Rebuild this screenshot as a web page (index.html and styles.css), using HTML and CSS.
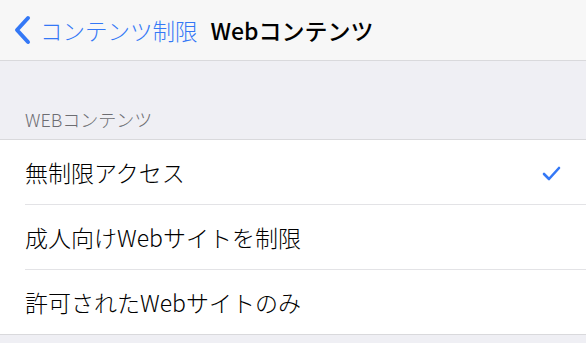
FILE: index.html
```html
<!DOCTYPE html>
<html lang="ja">
<head>
    <meta charset="UTF-8">
    <meta name="viewport" content="width=device-width, initial-scale=1.0">
    <title>Webコンテンツ</title>
    <link rel="stylesheet" href="styles.css">
</head>
<body>
    <div class="navbar">
        <a class="back" href="#">
            <svg class="chevron" width="20" height="30" viewBox="0 0 20 30">
                <path d="M16 3 L5 15 L16 27" fill="none" stroke="#3478f6" stroke-width="4" stroke-linecap="round" stroke-linejoin="round"/>
            </svg>
            <span>コンテンツ制限</span>
        </a>
        <div class="title">Webコンテンツ</div>
    </div>

    <div class="section-header">WEBコンテンツ</div>
    <ul class="list">
        <li class="row">
            <span>無制限アクセス</span>
            <svg class="check" width="20" height="16" viewBox="0 0 20 16">
                <path d="M2 9 L7 14 L17 3" fill="none" stroke="#3478f6" stroke-width="2.6" stroke-linecap="round" stroke-linejoin="round"/>
            </svg>
        </li>
        <li class="row"><span>成人向けWebサイトを制限</span></li>
        <li class="row"><span>許可されたWebサイトのみ</span></li>
    </ul>
</body>
</html>
```

FILE: styles.css
```css
body {
    font-family: "Noto Sans CJK JP", "Noto Sans", sans-serif;
    background-color: #efeff4;
    color: #000;
    margin: 0;
    padding: 0;
}
.navbar {
    height: 60px;
    background: #f7f7f7;
    border-bottom: 1px solid #d9d9dc;
    display: flex;
    align-items: center;
}
.back {
    display: flex;
    align-items: center;
    color: #3478f6;
    text-decoration: none;
    font-size: 22.5px;
    font-weight: 300;
    padding-left: 12px;
}
.chevron {
    margin-right: 8px;
}
.title {
    font-size: 23px;
    font-weight: 500;
    margin-left: 13px;
}
.section-header {
    color: #6d6d72;
    font-size: 18px;
    font-weight: 300;
    padding: 46px 25px 8px;
    line-height: 24px;
}
.list {
    list-style: none;
    margin: 0;
    padding: 0 0 0 25px;
    background: #fff;
    border-top: 1px solid #d9d9dc;
    border-bottom: 1px solid #d9d9dc;
}
.row {
    height: 64px;
    display: flex;
    align-items: center;
    justify-content: space-between;
    padding-right: 24px;
    font-size: 23px;
    font-weight: 300;
    border-bottom: 1px solid #e3e3e6;
}
.row:last-child {
    border-bottom: none;
}
.check {
    margin-top: 2px;
}
```
